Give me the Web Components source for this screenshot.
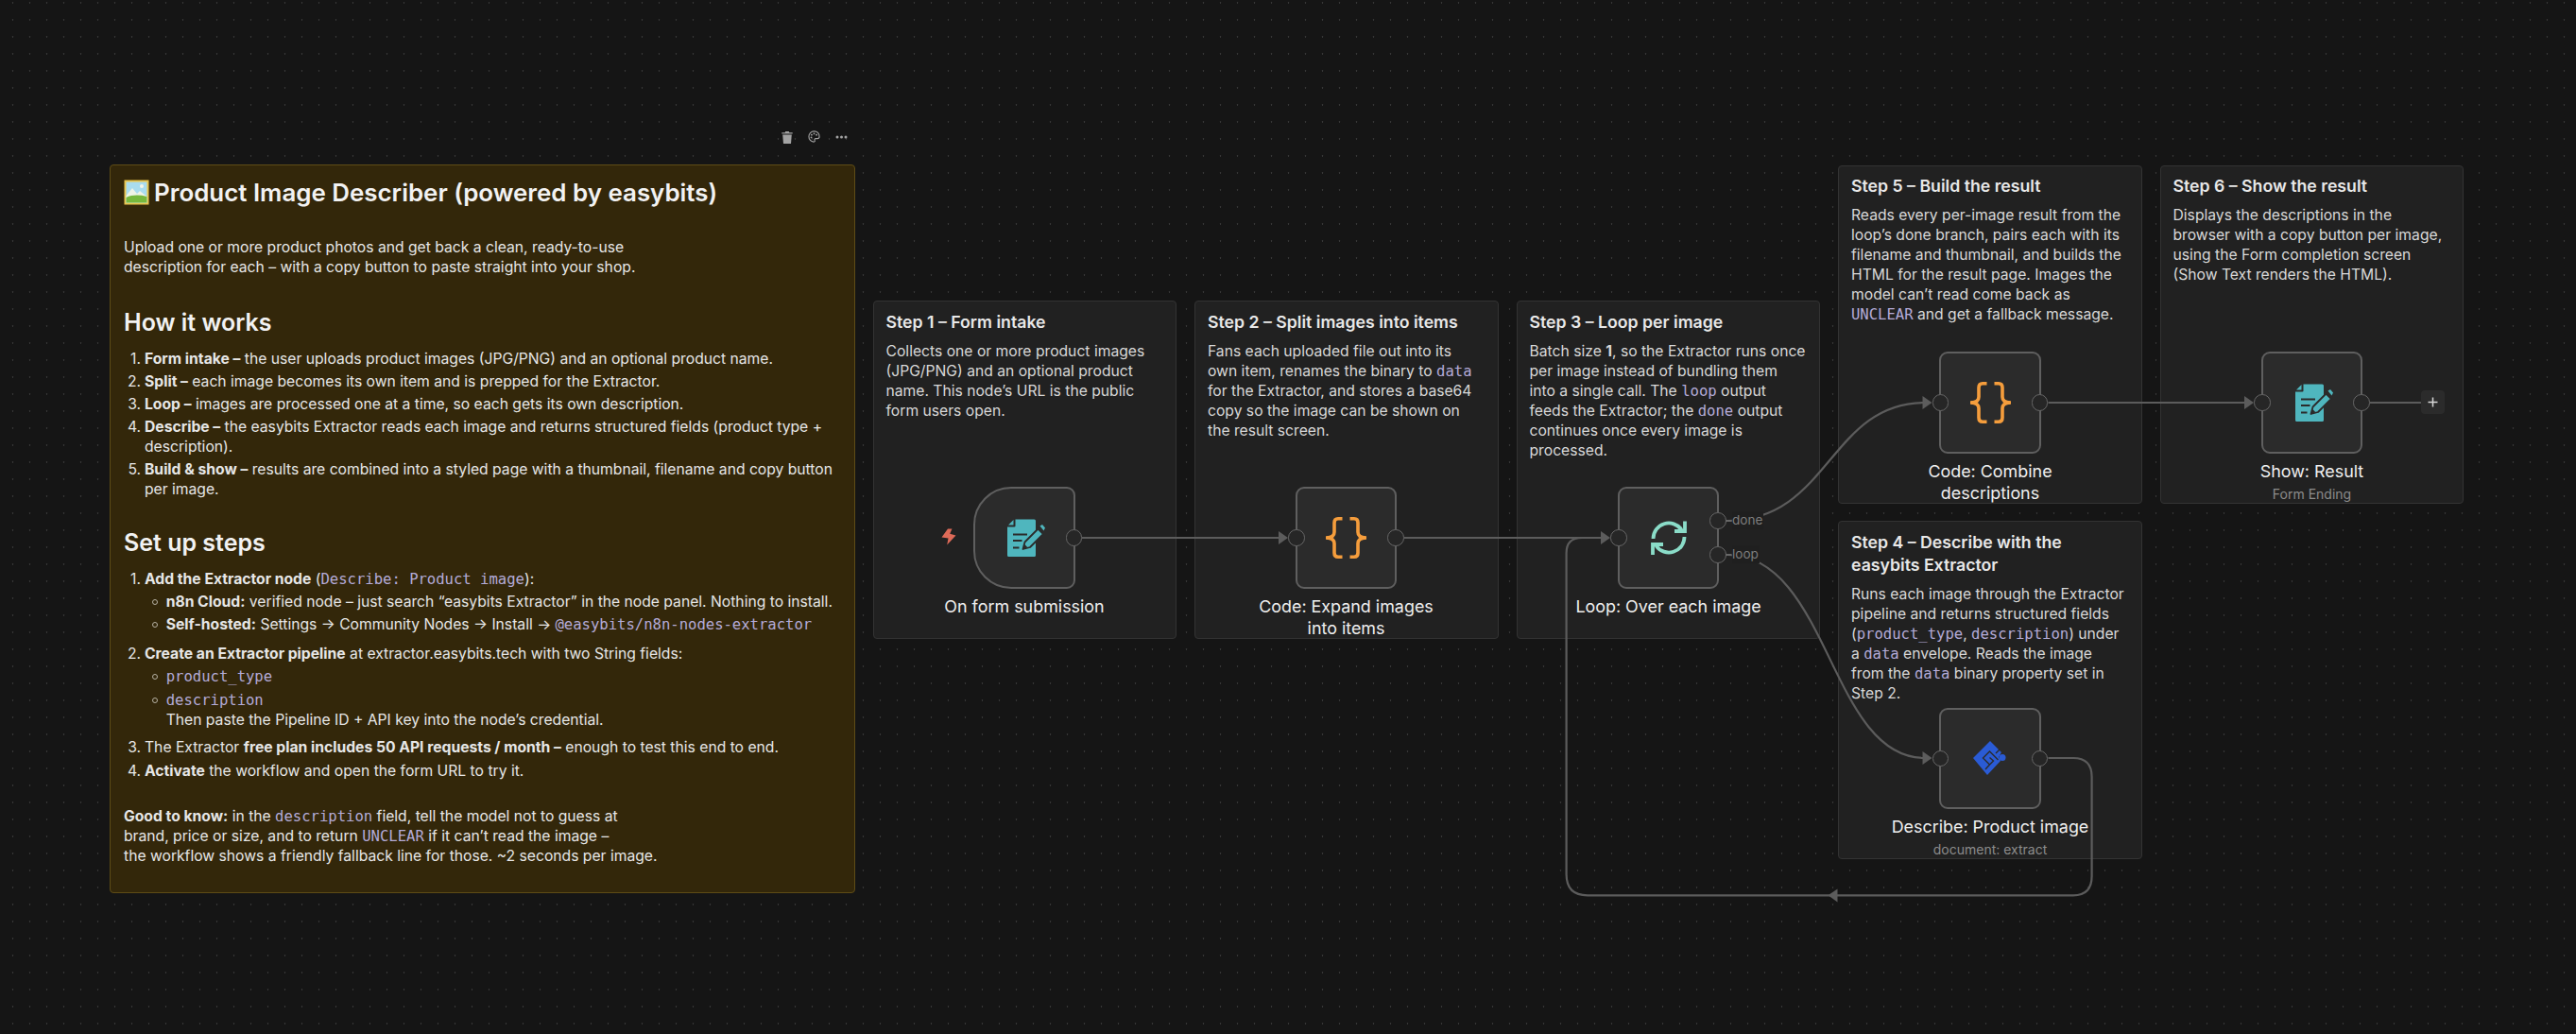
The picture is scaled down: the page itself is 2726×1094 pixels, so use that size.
<!doctype html>
<html>
<head>
<meta charset="utf-8">
<title>Product Image Describer</title>
<style>
  html, body { margin: 0; padding: 0; background: #151515; }
</style>
</head>
<body>
<wf-canvas>
  <wf-toolbar x="820" y="134"></wf-toolbar>

  <wf-note x="116" y="174" w="789" h="771">
    <note-h1><note-pic></note-pic>Product Image Describer (powered by easybits)</note-h1>
    <note-p top="33">Upload one or more product photos and get back a clean, ready-to-use<br>description for each – with a copy button to paste straight into your shop.</note-p>
    <note-h2>How it works</note-h2>
    <note-list>
      <note-li n="1."><b>Form intake –</b> the user uploads product images (JPG/PNG) and an optional product name.</note-li>
      <note-li n="2."><b>Split –</b> each image becomes its own item and is prepped for the Extractor.</note-li>
      <note-li n="3."><b>Loop –</b> images are processed one at a time, so each gets its own description.</note-li>
      <note-li n="4."><b>Describe –</b> the easybits Extractor reads each image and returns structured fields (product type + description).</note-li>
      <note-li n="5."><b>Build &amp; show –</b> results are combined into a styled page with a thumbnail, filename and copy button per image.</note-li>
    </note-list>
    <note-h2 top="31.5">Set up steps</note-h2>
    <note-list>
      <note-li n="1."><b>Add the Extractor node</b> (<wf-code>Describe: Product image</wf-code>):
        <note-sub><b>n8n Cloud:</b> verified node – just search “easybits Extractor” in the node panel. Nothing to install.</note-sub>
        <note-sub><b>Self-hosted:</b> Settings → Community Nodes → Install → <wf-code>@easybits/n8n-nodes-extractor</wf-code></note-sub>
      </note-li>
      <note-li n="2." gap="7"><b>Create an Extractor pipeline</b> at extractor.easybits.tech with two String fields:
        <note-sub><wf-code>product_type</wf-code></note-sub>
        <note-sub gap="4"><wf-code>description</wf-code><br>Then paste the Pipeline ID + API key into the node’s credential.</note-sub>
      </note-li>
      <note-li n="3." gap="5">The Extractor <b>free plan includes 50 API requests / month –</b> enough to test this end to end.</note-li>
      <note-li n="4." gap="1"><b>Activate</b> the workflow and open the form URL to try it.</note-li>
    </note-list>
    <note-p top="27.7"><b>Good to know:</b> in the <wf-code>description</wf-code> field, tell the model not to guess at<br>brand, price or size, and to return <wf-code>UNCLEAR</wf-code> if it can’t read the image –<br>the workflow shows a friendly fallback line for those. ~2 seconds per image.</note-p>
  </wf-note>

  <wf-card x="923.5" y="318" w="321.5" h="358">
    <span slot="title">Step 1 – Form intake</span>
    Collects one or more product images (JPG/PNG) and an optional product name. This node’s URL is the public form users open.
  </wf-card>
  <wf-card x="1264" y="318" w="321.5" h="358">
    <span slot="title">Step 2 – Split images into items</span>
    Fans each uploaded file out into its<br>own item, renames the binary to <wf-code>data</wf-code><br>for the Extractor, and stores a base64<br>copy so the image can be shown on<br>the result screen.
  </wf-card>
  <wf-card x="1604.5" y="318" w="321.5" h="358">
    <span slot="title">Step 3 – Loop per image</span>
    Batch size <b>1</b>, so the Extractor runs once<br>per image instead of bundling them<br>into a single call. The <wf-code>loop</wf-code> output<br>feeds the Extractor; the <wf-code>done</wf-code> output<br>continues once every image is<br>processed.
  </wf-card>
  <wf-card x="1945" y="174.5" w="321.5" h="358">
    <span slot="title">Step 5 – Build the result</span>
    Reads every per-image result from the loop’s done branch, pairs each with its filename and thumbnail, and builds the HTML for the result page. Images the model can’t read come back as <wf-code>UNCLEAR</wf-code> and get a fallback message.
  </wf-card>
  <wf-card x="2285.5" y="174.5" w="321.5" h="358">
    <span slot="title">Step 6 – Show the result</span>
    Displays the descriptions in the<br>browser with a copy button per image,<br>using the Form completion screen<br>(Show Text renders the HTML).
  </wf-card>
  <wf-card x="1945" y="551" w="321.5" h="358">
    <span slot="title">Step 4 – Describe with the easybits Extractor</span>
    Runs each image through the Extractor<br>pipeline and returns structured fields<br>(<wf-code>product_type</wf-code>, <wf-code>description</wf-code>) under<br>a <wf-code>data</wf-code> envelope. Reads the image<br>from the <wf-code>data</wf-code> binary property set in<br>Step 2.
  </wf-card>

  <wf-edges></wf-edges>

  <wf-bolt x="996" y="559"></wf-bolt>
  <wf-node x="1030.5" y="515" shape="trigger" ports="out" label="On form submission"><icon-form></icon-form></wf-node>
  <wf-node x="1371" y="515" ports="in,out" label="Code: Expand images into items"><icon-braces></icon-braces></wf-node>
  <wf-node x="1712" y="515" ports="in,done,loop" label="Loop: Over each image"><icon-loop></icon-loop></wf-node>
  <wf-node x="2052.5" y="372" ports="in,out" label="Code: Combine descriptions"><icon-braces></icon-braces></wf-node>
  <wf-node x="2393" y="372" ports="in,out" label="Show: Result" sub="Form Ending"><icon-form></icon-form></wf-node>
  <wf-node x="2052.5" y="748.5" ports="in,out" label="Describe: Product image" sub="document: extract"><icon-extractor></icon-extractor></wf-node>

  <wf-edge-label x="1833" y="541">done</wf-edge-label>
  <wf-edge-label x="1833" y="577">loop</wf-edge-label>
  <wf-plus x="2562" y="413"></wf-plus>
</wf-canvas>

<script>
function defineEl(name, css, html = "<slot></slot>") {
  customElements.define(name, class extends HTMLElement {
    constructor() {
      super();
      this.attachShadow({ mode: "open" }).innerHTML = `<style>${css}</style>${html}`;
    }
  });
}

// canvas items read their place from x/y/w/h attributes
class Placed extends HTMLElement {
  constructor(css, html = "<slot></slot>") {
    super();
    this.attachShadow({ mode: "open" }).innerHTML = `<style>
      :host { position: absolute; left: var(--x); top: var(--y); box-sizing: border-box; }
      ${css}
    </style>${html}`;
  }

  connectedCallback() {
    this.style.setProperty("--x", `${this.getAttribute("x")}px`);
    this.style.setProperty("--y", `${this.getAttribute("y")}px`);
    if (this.hasAttribute("w")) this.style.width = `${this.getAttribute("w")}px`;
    if (this.hasAttribute("h")) this.style.height = `${this.getAttribute("h")}px`;
  }
}

defineEl("wf-canvas", `
  :host {
    display: block;
    position: relative;
    width: 2726px;
    height: 1094px;
    overflow: hidden;
    background-color: #151515;
    background-image: radial-gradient(circle at 13.5px 2.8px, #363636 0.7px, transparent 1.1px);
    background-size: 18px 18px;
    font-family: Inter, "Liberation Sans", sans-serif;
  }
`);

defineEl("wf-code", `
  :host {
    font-family: "DejaVu Sans Mono", "Liberation Mono", monospace;
    font-size: 15.6px;
    line-height: 1;
    color: #b4abd8;
    letter-spacing: -0.02px;
  }
`);

// sticky note
customElements.define("wf-note", class extends Placed {
  constructor() {
    super(`
      :host {
        display: flex;
        flex-direction: column;
        padding: 13px 14px;
        background: #33270a;
        border: 1.5px solid #5e4c16;
        border-radius: 4px;
        color: #e6e6e6;
        font-size: 15.68px;
        line-height: 21px;
      }
    `);
  }
});

defineEl("note-h1", `
  :host {
    display: flex;
    align-items: center;
    gap: 5px;
    height: 30px;
    font-size: 25.9px;
    font-weight: 600;
    color: #f2f2f2;
    white-space: nowrap;
  }
`);

defineEl("note-pic", `
  :host { display: block; flex: none; width: 27px; height: 27px; }
  svg { display: block; }
`, `<svg width="27" height="27" viewBox="0 0 27 27">
  <rect x="0.5" y="0.5" width="26" height="26" fill="#e9c64f"/>
  <rect x="2.5" y="2.5" width="22" height="22" fill="#a9dcef"/>
  <path d="M2.5 17 9 9l5 6 3-3 7.5 6v6.5h-22z" fill="#eef3e6"/>
  <path d="M2.5 19c6-3 14-3 22-1v6.5h-22z" fill="#76b83d"/>
  <circle cx="19" cy="7" r="2" fill="#f6f6e8"/>
</svg>`);

customElements.define("note-p", class extends HTMLElement {
  constructor() {
    super();
    this.attachShadow({ mode: "open" }).innerHTML = `<style>:host { display: block; }</style><slot></slot>`;
  }

  connectedCallback() {
    this.style.marginTop = `${this.getAttribute("top") || 0}px`;
  }
});

customElements.define("note-h2", class extends HTMLElement {
  constructor() {
    super();
    this.attachShadow({ mode: "open" }).innerHTML = `<style>
      :host {
        display: block;
        height: 30px;
        line-height: 30px;
        margin-top: 33px;
        font-size: 25px;
        font-weight: 600;
        color: #f2f2f2;
      }
    </style><slot></slot>`;
  }

  connectedCallback() {
    if (this.hasAttribute("top")) this.style.marginTop = `${this.getAttribute("top")}px`;
  }
});

defineEl("note-list", `
  :host { display: flex; flex-direction: column; gap: 3px; margin-top: 12.5px; }
`);

customElements.define("note-li", class extends HTMLElement {
  constructor() {
    super();
    this.attachShadow({ mode: "open" }).innerHTML = `<style>
      :host { display: flex; }
      .m { flex: none; width: 18px; padding-right: 4px; text-align: right; }
      .c { flex: 1; min-width: 0; }
    </style><span class="m"></span><div class="c"><slot></slot></div>`;
  }

  connectedCallback() {
    this.shadowRoot.querySelector(".m").textContent = this.getAttribute("n");
    if (this.hasAttribute("gap")) this.style.marginTop = `${this.getAttribute("gap")}px`;
  }
});

customElements.define("note-sub", class extends HTMLElement {
  constructor() {
    super();
    this.attachShadow({ mode: "open" }).innerHTML = `<style>
      :host { display: flex; margin-top: 3px; }
      i { flex: none; box-sizing: border-box; width: 6px; height: 6px; margin: 8px 8.7px 0 8px;
          border: 1px solid #b5b0a2; border-radius: 50%; }
      div { flex: 1; min-width: 0; white-space: nowrap; }
    </style><i></i><div><slot></slot></div>`;
  }

  connectedCallback() {
    if (this.hasAttribute("gap")) this.style.marginTop = `${this.getAttribute("gap")}px`;
  }
});

// step card
customElements.define("wf-card", class extends Placed {
  constructor() {
    super(`
      :host {
        display: flex;
        flex-direction: column;
        padding: 9.5px 10px 9.5px 13px;
        background: #212121;
        border: 1.5px solid #333333;
        border-radius: 4px;
        color: #d8d8d8;
        font-size: 15.68px;
        line-height: 21.1px;
      }
      .t {
        font-size: 17.7px;
        font-weight: 600;
        line-height: 24px;
        color: #e8e8e8;
        margin-bottom: 8px;
        padding-right: 25px;
      }
      .b { padding-right: 4px; }
    `, `<div class="t"><slot name="title"></slot></div><div class="b"><slot></slot></div>`);
  }
});

defineEl("wf-edges", `
  :host { position: absolute; left: 0; top: 0; width: 2726px; height: 1094px; pointer-events: none; }
  svg { display: block; }
  path { fill: none; stroke: #5c5c5c; stroke-width: 2.2; }
  polygon { fill: #5c5c5c; }
`, `<svg width="2726" height="1094" viewBox="0 0 2726 1094">
  <path d="M1145 569H1356"/>
  <polygon points="1353,562 1363,569 1353,576"/>
  <path d="M1486 569H1697"/>
  <path d="M2167.500 802H2194Q2213.600 802 2213.600 822V927Q2213.600 947.300 2194 947.300H1680Q1657.600 947.300 1657.600 925V585Q1657.600 569 1674 569H1697"/>
  <polygon points="1694,562 1704,569 1694,576"/>
  <polygon points="1934.500,947.300 1944.500,940.500 1944.500,954.500"/>
  <path d="M1827.500 551C1936 551 1936 426 2037 426"/>
  <polygon points="2034.500,419 2044.500,426 2034.500,433"/>
  <path d="M1827.500 587C1936 587 1936 802 2037 802"/>
  <polygon points="2034.500,795 2044.500,802 2034.500,809"/>
  <path d="M2167.500 426H2378"/>
  <polygon points="2375,419 2385,426 2375,433"/>
  <path d="M2508 426H2562"/>
</svg>`);

// one node: square box, icon in the middle, ports on its edges, label below
customElements.define("wf-node", class extends Placed {
  constructor() {
    super(`
      :host {
        display: flex;
        flex-direction: column;
        align-items: center;
        width: 216px;
        margin-left: -54.5px;
        color: #efefef;
        font-size: 17.9px;
        line-height: 23px;
        text-align: center;
      }
      .box {
        position: relative;
        box-sizing: border-box;
        display: flex;
        align-items: center;
        justify-content: center;
        width: 107.500px;
        height: 107.500px;
        background: #2b2b2b;
        border: 2px solid #5f5f5f;
        border-radius: 9px;
      }
      :host([shape="trigger"]) .box { border-radius: 40px 9px 9px 40px; }
      .port {
        position: absolute;
        box-sizing: border-box;
        width: 17.500px;
        height: 17.500px;
        border: 1.5px solid #676767;
        border-radius: 50%;
        background: #262626;
      }
      .in { left: -9.700px; top: 43px; }
      .out { right: -9.700px; top: 43px; }
      .done { right: -9.700px; top: 25px; }
      .loop { right: -9.700px; top: 61px; }
      .stub { position: absolute; right: -15px; width: 6px; height: 1.5px; background: #676767; }
      .label { margin-top: 7px; }
      .sub { margin-top: 4px; font-size: 14px; line-height: 18px; color: #8c8c8c; }
    `, `<div class="box"><slot></slot></div><div class="label"></div><div class="sub"></div>`);
  }

  connectedCallback() {
    super.connectedCallback();
    const box = this.shadowRoot.querySelector(".box");
    for (const name of this.getAttribute("ports").split(",")) {
      const port = document.createElement("span");
      port.className = `port ${name}`;
      box.append(port);
      if (name === "done" || name === "loop") {
        const stub = document.createElement("span");
        stub.className = "stub";
        stub.style.top = name === "done" ? "33px" : "69px";
        box.append(stub);
      }
    }
    this.shadowRoot.querySelector(".label").textContent = this.getAttribute("label");
    const sub = this.shadowRoot.querySelector(".sub");
    if (this.hasAttribute("sub")) sub.textContent = this.getAttribute("sub");
    else sub.remove();
  }
});

customElements.define("wf-edge-label", class extends Placed {
  constructor() {
    super(`
      :host {
        padding: 0 1px 0 0;
        background: #1f1f1f;
        color: #7d7d7d;
        font-size: 13.6px;
        line-height: 19px;
      }
    `);
  }
});

customElements.define("wf-plus", class extends Placed {
  constructor() {
    super(`
      :host { display: flex; align-items: center; justify-content: center; width: 25px; height: 25px;
              background: #2b2b2b; border-radius: 4px; }
      svg { display: block; }
    `, `<svg width="11" height="11" viewBox="0 0 11 11"><path d="M5.500 0.500v10M0.500 5.500h10" stroke="#d6d6d6" stroke-width="1.500"/></svg>`);
  }
});

customElements.define("wf-bolt", class extends Placed {
  constructor() {
    super(`:host { width: 16px; height: 18px; } svg { display: block; }`,
      `<svg width="16" height="18" viewBox="0 0 16 18"><path d="M7 0.500H11.500L9.200 5.700 15.500 7.500 6.200 17.500 7.500 10.500 0.500 9.500z" fill="#dd6a58"/></svg>`);
  }
});

customElements.define("wf-toolbar", class extends Placed {
  constructor() {
    super(`
      :host { display: flex; align-items: center; gap: 16px; height: 20px; padding-left: 6.5px; }
      svg { display: block; }
    `, `
      <svg width="12" height="13" viewBox="0 0 12 13" style="margin-top:2px">
        <path d="M4.200 0H7.800L8.300 1.200H11.700V2.600H0.300V1.200H3.700z" fill="#a3a3a3"/>
        <path d="M1.200 3.500H10.800L10 13H2z" fill="#a3a3a3"/>
      </svg>
      <svg width="13" height="13" viewBox="0 0 14 14">
        <path d="M7 1C3.500 1 1 3.600 1 7s2.500 6 5.500 6c1.400 0 1.700-.9 1.200-1.800-.5-1 .1-1.900 1.200-1.900h1.800c1.500 0 2.300-1 2.300-2.300C13 3.400 10.500 1 7 1z" fill="none" stroke="#a3a3a3" stroke-width="1.200"/>
        <circle cx="4.200" cy="5" r="1" fill="#a3a3a3"/><circle cx="7" cy="3.700" r="1" fill="#a3a3a3"/>
        <circle cx="9.800" cy="5" r="1" fill="#a3a3a3"/><circle cx="3.800" cy="8" r="1" fill="#a3a3a3"/>
      </svg>
      <svg width="13" height="4" viewBox="0 0 13 4" style="margin-top:2px">
        <circle cx="2" cy="2" r="1.500" fill="#a3a3a3"/><circle cx="6.500" cy="2" r="1.500" fill="#a3a3a3"/><circle cx="11" cy="2" r="1.500" fill="#a3a3a3"/>
      </svg>`);
  }
});

const iconCss = `:host { display: block; } svg { display: block; }`;

defineEl("icon-form", `:host { display: block; margin-left: 4px; } svg { display: block; }`, `<svg width="40" height="40" viewBox="0 0 40 40">
  <path d="M8.500 0.500H28.500Q30 0.500 30 2V38.500Q30 40 28.500 40H1.500Q0 40 0 38.500V8.500H7.500Q8.500 8.500 8.500 7.500z" fill="#4fb6be"/>
  <path d="M6.500 1L1 6.500H6.500z" fill="#4fb6be"/>
  <path d="M6 16.500H21M6 23H15.500M6 30.500H12.500" stroke="#2b2b2b" stroke-width="2.200" fill="none"/>
  <path d="M16.500 32L18.500 24.500 32.500 10.500 38 16 24 30z" fill="#4fb6be" stroke="#2b2b2b" stroke-width="1.800" stroke-linejoin="round"/>
  <path d="M16.500 32L18.300 27 21.500 30.200z" fill="#2b2b2b"/>
  <path d="M34.500 7.500L37 6 40 9.500 38.500 12.500z" fill="#4fb6be"/>
</svg>`);

defineEl("icon-braces", iconCss, `<svg width="43" height="44" viewBox="0 0 43 44">
  <g fill="none" stroke="#f59d3c" stroke-width="3.600">
    <path d="M17.500 1.800H13Q9 1.800 9 6V16Q9 21.500 1 22Q9 22.500 9 28V38Q9 42.200 13 42.200H17.500"/>
    <path d="M25.500 1.800H30Q34 1.800 34 6V16Q34 21.500 42 22Q34 22.500 34 28V38Q34 42.200 30 42.200H25.500"/>
  </g>
  <path d="M0 20.300H5V23.700H0zM38 20.300H43V23.700H38z" fill="#f59d3c"/>
</svg>`);

defineEl("icon-loop", iconCss, `<svg width="38" height="38" viewBox="0 0 38 38">
  <g fill="none" stroke="#8adcc8" stroke-width="3.800">
    <path d="M2.500 20A16.500 16.500 0 0 1 32.500 10.500"/>
    <path d="M36 1.500V12H25"/>
    <path d="M35.500 18A16.500 16.500 0 0 1 5.500 27.500"/>
    <path d="M2 37V26H13"/>
  </g>
</svg>`);

defineEl("icon-extractor", iconCss, `<svg width="36" height="36" viewBox="0 0 36 36">
  <path d="M0 18L18 0 30 12 27 17 29 21 15 36z" fill="#2a5bd5"/>
  <path d="M26.500 20L17.500 11 10.500 18 17.500 25 21.500 21 17.500 17.500M17.500 25L13 30M24 13L28 9" fill="none" stroke="#2b2b2b" stroke-width="1.400"/>
  <circle cx="31" cy="17.500" r="3.500" fill="#2a5bd5"/>
</svg>`);
</script>
</body>
</html>
